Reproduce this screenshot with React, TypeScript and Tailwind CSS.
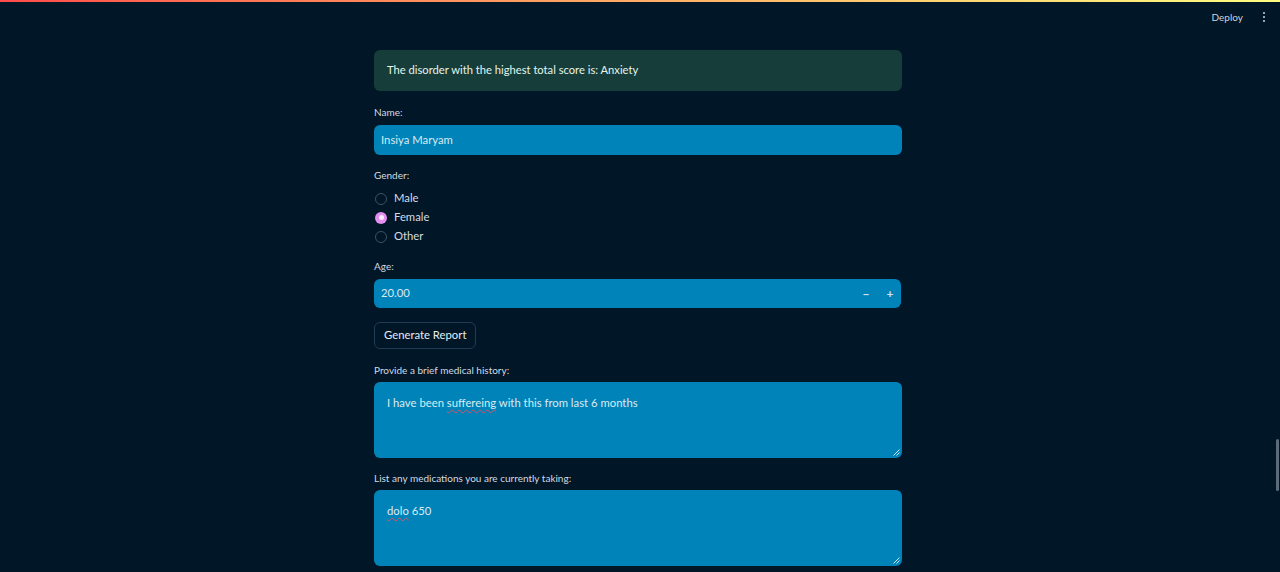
import React, { useState } from 'react';

const font = { fontFamily: 'Lato, "Liberation Sans", sans-serif' };

function Grip() {
  return (
    <svg className="absolute right-[2px] bottom-[2px]" width="7" height="7" viewBox="0 0 7 7">
      <path d="M6.5 0.5 L0.5 6.5 M6.5 3.5 L3.5 6.5" stroke="#cfe6f2" strokeWidth="1" />
    </svg>
  );
}

export default function App() {
  const [gender, setGender] = useState('Female');
  const genders = ['Male', 'Female', 'Other'];

  return (
    <div className="min-h-[572px] w-full bg-[#011627] relative overflow-hidden" style={font}>
      {/* decoration bar */}
      <div className="h-[2px] w-full bg-gradient-to-r from-[#ff4b4b] to-[#fffd80]" />

      {/* header */}
      <div className="flex justify-end items-center h-[30px] pr-[15px] gap-[20px]">
        <span className="text-[10px] text-[#c9d4de]">Deploy</span>
        <span className="flex flex-col gap-[2px] items-center">
          <span className="w-[2px] h-[2px] rounded-full bg-[#c9d4de]" />
          <span className="w-[2px] h-[2px] rounded-full bg-[#c9d4de]" />
          <span className="w-[2px] h-[2px] rounded-full bg-[#c9d4de]" />
        </span>
      </div>

      {/* scrollbar */}
      <div className="absolute right-[1px] top-[439px] w-[3px] h-[52px] rounded bg-[#5b6b79]" />

      <div className="pr-[4px]">
        <div className="w-[528px] mx-auto pt-[18px] flex flex-col">
          <div className="h-[41px] rounded-[6px] bg-[#173d3a] flex items-center px-[13px] text-[11.2px] text-[#e3f5ea]">
            The disorder with the highest total score is: Anxiety
          </div>

          <label className="mt-[14px] leading-[14px] text-[10px] text-[#d3dae1]">Name:</label>
          <div className="mt-[6px] h-[30px] rounded-[6px] bg-[#0083b8] flex items-center px-[7px] text-[11.3px] text-[#dbeaf3]">
            Insiya Maryam
          </div>

          <label className="mt-[13px] leading-[14px] text-[10px] text-[#d3dae1]">Gender:</label>
          <div className="mt-[7px] flex flex-col pl-[1px]">
            {genders.map((g) => (
              <button
                key={g}
                onClick={() => setGender(g)}
                className="h-[19px] flex items-center gap-[7px] text-left"
              >
                {gender === g ? (
                  <span className="w-[12px] h-[12px] rounded-full bg-[#e48ef0] flex items-center justify-center">
                    <span className="w-[5px] h-[5px] rounded-full bg-[#fbe9fd]" />
                  </span>
                ) : (
                  <span className="w-[12px] h-[12px] rounded-full border border-[#3b5366]" />
                )}
                <span className="text-[11.3px] text-[#d3dce4]">{g}</span>
              </button>
            ))}
          </div>

          <label className="mt-[13px] leading-[14px] text-[10px] text-[#d3dae1]">Age:</label>
          <div className="mt-[6px] h-[29px] w-[527px] rounded-[6px] bg-[#0083b8] flex items-center pl-[7px] gap-[2px] text-[11.3px] text-[#dbeaf3]">
            <span className="flex-1">20.00</span>
            <span className="w-[22px] text-center text-[12px] font-bold text-[#cfe3ee]">−</span>
            <span className="w-[22px] text-center text-[12px] font-bold text-[#cfe3ee]">+</span>
          </div>

          <div className="mt-[13px]">
            <button className="h-[27px] px-[9px] rounded-[6px] border border-[#203b52] bg-[#011627] text-[11.3px] text-[#e6edf3]">
              Generate Report
            </button>
          </div>

          <label className="mt-[14px] leading-[14px] text-[10px] text-[#d3dae1]">Provide a brief medical history:</label>
          <div className="relative mt-[5px] h-[76px] rounded-[6px] bg-[#0083b8] px-[13px] pt-[13px] text-[11.3px] text-[#dbeaf3]">
            I have been{' '}
            <span className="underline decoration-wavy decoration-[#e05060] decoration-1 underline-offset-2">suffereing</span>{' '}
            with this from last 6 months
            <Grip />
          </div>

          <label className="mt-[13px] leading-[14px] text-[10px] text-[#d3dae1]">List any medications you are currently taking:</label>
          <div className="relative mt-[5px] h-[76px] rounded-[6px] bg-[#0083b8] px-[13px] pt-[13px] text-[11.3px] text-[#dbeaf3]">
            <span className="underline decoration-wavy decoration-[#e05060] decoration-1 underline-offset-2">dolo</span> 650
            <Grip />
          </div>
        </div>
      </div>
    </div>
  );
}
